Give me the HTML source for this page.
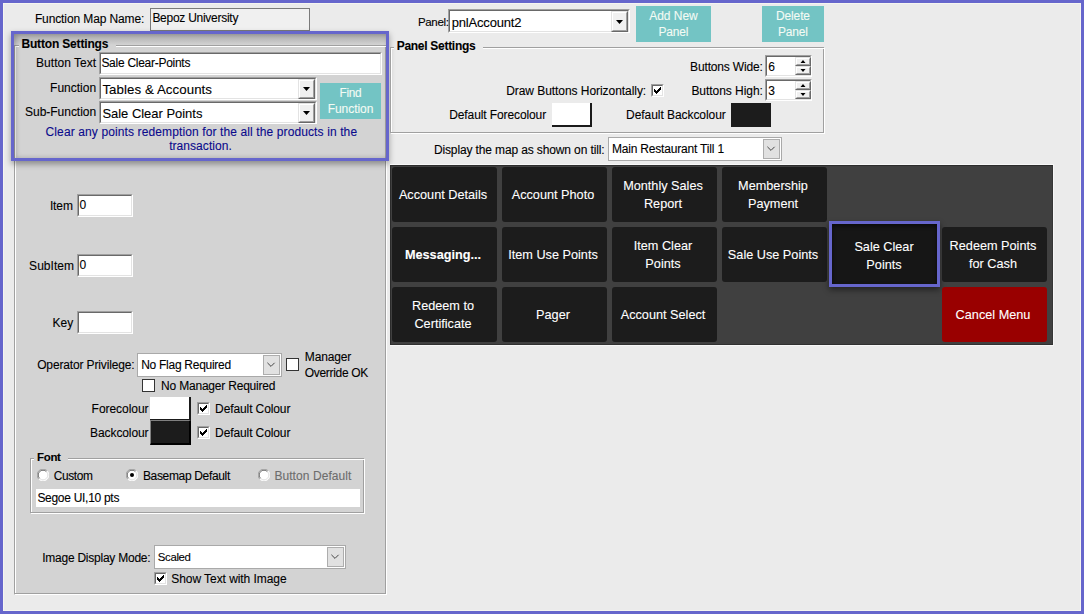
<!DOCTYPE html><html><head><meta charset="utf-8"><style>html,body{margin:0;padding:0;width:1084px;height:614px;overflow:hidden;position:relative;font-family:"Liberation Sans", sans-serif} div{-webkit-text-stroke:0.1px currentColor}</style></head><body><div style="position:absolute;left:0px;top:0px;width:1084px;height:614px;box-sizing:border-box;border:3px solid #6666cc;background:#ebebeb"></div><div style="position:absolute;left:3px;top:3px;width:1078px;height:608px;box-sizing:border-box;border:1px solid #f5f5f0"></div><div style="position:absolute;left:150px;top:8px;width:160px;height:23px;box-sizing:border-box;border:1px solid #7a7a7a;background:#f0f0f0"></div><div style="position:absolute;left:14px;top:34px;width:373px;height:561px;background:#d3d3d3"></div><div style="position:absolute;left:15px;top:46px;width:372px;height:549px;box-sizing:border-box;border:1px solid #fff;border-top:none"></div><div style="position:absolute;left:14px;top:45px;width:372px;height:549px;box-sizing:border-box;border:1px solid #a0a0a0;border-top:none"></div><div style="position:absolute;left:14px;top:45px;width:5px;height:1px;background:#a0a0a0"></div><div style="position:absolute;left:15px;top:46px;width:4px;height:1px;background:#fff"></div><div style="position:absolute;left:116px;top:45px;width:270px;height:1px;background:#a0a0a0"></div><div style="position:absolute;left:116px;top:46px;width:270px;height:1px;background:#fff"></div><div style="position:absolute;left:11px;top:31px;width:378px;height:130px;box-sizing:border-box;border:3px solid #6666cc;box-shadow:0 3px 6px rgba(0,0,0,0.35), inset 2px 0 5px rgba(0,0,0,0.22)"></div><div style="position:absolute;left:14px;top:34px;width:372px;height:11px;background:linear-gradient(to bottom, rgba(0,0,0,0.2), rgba(0,0,0,0.1) 50%, rgba(0,0,0,0))"></div><div style="position:absolute;left:99px;top:52px;width:283px;height:23px;box-sizing:border-box;border:1px solid;border-color:#a0a0a0 #fff #fff #a0a0a0;background:#fff"></div><div style="position:absolute;left:100px;top:53px;width:281px;height:21px;box-sizing:border-box;border:1px solid;border-color:#696969 #e3e3e3 #e3e3e3 #696969"></div><div style="position:absolute;left:99px;top:77px;width:218px;height:23px;box-sizing:border-box;border:1px solid;border-color:#a0a0a0 #fff #fff #a0a0a0;background:#fff"></div><div style="position:absolute;left:100px;top:78px;width:216px;height:21px;box-sizing:border-box;border:1px solid;border-color:#696969 #e3e3e3 #e3e3e3 #696969"></div><div style="position:absolute;left:298px;top:79px;width:17px;height:20px;box-sizing:border-box;border:1px solid;border-color:#e3e3e3 #696969 #696969 #e3e3e3;background:#f0f0f0"></div><div style="position:absolute;left:299px;top:80px;width:15px;height:18px;box-sizing:border-box;border:1px solid;border-color:#fff #a0a0a0 #a0a0a0 #fff"></div><svg style="position:absolute;left:298px;top:87px" width="17" height="5"><path d="M5 0h7l-3.5 4z" fill="#000"/></svg><div style="position:absolute;left:99px;top:101px;width:218px;height:23px;box-sizing:border-box;border:1px solid;border-color:#a0a0a0 #fff #fff #a0a0a0;background:#fff"></div><div style="position:absolute;left:100px;top:102px;width:216px;height:21px;box-sizing:border-box;border:1px solid;border-color:#696969 #e3e3e3 #e3e3e3 #696969"></div><div style="position:absolute;left:298px;top:103px;width:17px;height:20px;box-sizing:border-box;border:1px solid;border-color:#e3e3e3 #696969 #696969 #e3e3e3;background:#f0f0f0"></div><div style="position:absolute;left:299px;top:104px;width:15px;height:18px;box-sizing:border-box;border:1px solid;border-color:#fff #a0a0a0 #a0a0a0 #fff"></div><svg style="position:absolute;left:298px;top:111px" width="17" height="5"><path d="M5 0h7l-3.5 4z" fill="#000"/></svg><div style="position:absolute;left:320px;top:83px;width:61px;height:36px;background:#73c4c4"></div><div style="position:absolute;left:77px;top:194px;width:56px;height:23px;box-sizing:border-box;border:1px solid;border-color:#a0a0a0 #fff #fff #a0a0a0;background:#fff"></div><div style="position:absolute;left:78px;top:195px;width:54px;height:21px;box-sizing:border-box;border:1px solid;border-color:#696969 #e3e3e3 #e3e3e3 #696969"></div><div style="position:absolute;left:77px;top:254px;width:56px;height:23px;box-sizing:border-box;border:1px solid;border-color:#a0a0a0 #fff #fff #a0a0a0;background:#fff"></div><div style="position:absolute;left:78px;top:255px;width:54px;height:21px;box-sizing:border-box;border:1px solid;border-color:#696969 #e3e3e3 #e3e3e3 #696969"></div><div style="position:absolute;left:77px;top:311px;width:56px;height:23px;box-sizing:border-box;border:1px solid;border-color:#a0a0a0 #fff #fff #a0a0a0;background:#fff"></div><div style="position:absolute;left:78px;top:312px;width:54px;height:21px;box-sizing:border-box;border:1px solid;border-color:#696969 #e3e3e3 #e3e3e3 #696969"></div><div style="position:absolute;left:137px;top:353px;width:145px;height:24px;box-sizing:border-box;border:1px solid #a9a9a9;background:#fff"></div><div style="position:absolute;left:263px;top:355px;width:17px;height:20px;box-sizing:border-box;border:1px solid #adadad;background:#e1e1e1"></div><svg style="position:absolute;left:263px;top:355px" width="17" height="20"><path d="M4.4 7.8l3.6 3.6l3.6 -3.6" fill="none" stroke="#454545" stroke-width="1"/></svg><div style="position:absolute;left:286px;top:358px;width:13px;height:13px;box-sizing:border-box;border:1px solid #333;background:#fff"></div><div style="position:absolute;left:142px;top:379px;width:13px;height:13px;box-sizing:border-box;border:1px solid #333;background:#fff"></div><div style="position:absolute;left:150px;top:397px;width:41px;height:24px;box-sizing:border-box;background:#fff;border-right:2px solid #1a1a1a;border-bottom:2px solid #1a1a1a"></div><div style="position:absolute;left:197px;top:402px;width:13px;height:13px;box-sizing:border-box;border:1px solid;border-color:#a0a0a0 #fff #fff #a0a0a0;background:#fff"></div><div style="position:absolute;left:198px;top:403px;width:11px;height:11px;box-sizing:border-box;border:1px solid;border-color:#696969 #e3e3e3 #e3e3e3 #696969"></div><svg style="position:absolute;left:197px;top:402px" width="13" height="13" shape-rendering="crispEdges"><path d="M9 3h1v1h-1zM8 4h1v1h-1zM9 4h1v1h-1zM3 5h1v1h-1zM7 5h1v1h-1zM8 5h1v1h-1zM9 5h1v1h-1zM3 6h1v1h-1zM4 6h1v1h-1zM6 6h1v1h-1zM7 6h1v1h-1zM8 6h1v1h-1zM3 7h1v1h-1zM4 7h1v1h-1zM5 7h1v1h-1zM6 7h1v1h-1zM7 7h1v1h-1zM4 8h1v1h-1zM5 8h1v1h-1zM6 8h1v1h-1zM5 9h1v1h-1z" fill="#000"/></svg><div style="position:absolute;left:150px;top:420px;width:41px;height:25px;box-sizing:border-box;background:#1c1c1c;border-top:1px solid #808080;border-left:1px solid #808080;border-right:2px solid #000;border-bottom:2px solid #000"></div><div style="position:absolute;left:197px;top:426px;width:13px;height:13px;box-sizing:border-box;border:1px solid;border-color:#a0a0a0 #fff #fff #a0a0a0;background:#fff"></div><div style="position:absolute;left:198px;top:427px;width:11px;height:11px;box-sizing:border-box;border:1px solid;border-color:#696969 #e3e3e3 #e3e3e3 #696969"></div><svg style="position:absolute;left:197px;top:426px" width="13" height="13" shape-rendering="crispEdges"><path d="M9 3h1v1h-1zM8 4h1v1h-1zM9 4h1v1h-1zM3 5h1v1h-1zM7 5h1v1h-1zM8 5h1v1h-1zM9 5h1v1h-1zM3 6h1v1h-1zM4 6h1v1h-1zM6 6h1v1h-1zM7 6h1v1h-1zM8 6h1v1h-1zM3 7h1v1h-1zM4 7h1v1h-1zM5 7h1v1h-1zM6 7h1v1h-1zM7 7h1v1h-1zM4 8h1v1h-1zM5 8h1v1h-1zM6 8h1v1h-1zM5 9h1v1h-1z" fill="#000"/></svg><div style="position:absolute;left:31px;top:459px;width:334px;height:55px;box-sizing:border-box;border:1px solid #fff;border-top:none"></div><div style="position:absolute;left:30px;top:458px;width:334px;height:55px;box-sizing:border-box;border:1px solid #a0a0a0;border-top:none"></div><div style="position:absolute;left:30px;top:458px;width:4px;height:1px;background:#a0a0a0"></div><div style="position:absolute;left:31px;top:459px;width:3px;height:1px;background:#fff"></div><div style="position:absolute;left:68px;top:458px;width:296px;height:1px;background:#a0a0a0"></div><div style="position:absolute;left:68px;top:459px;width:296px;height:1px;background:#fff"></div><svg style="position:absolute;left:37px;top:469px" width="12" height="12"><circle cx="6" cy="6" r="5.5" fill="#fff"/><path d="M1.8 10.2A5.5 5.5 0 0 1 10.2 1.8" fill="none" stroke="#a0a0a0" stroke-width="1"/><path d="M2.6 9.4A4.5 4.5 0 0 1 9.4 2.6" fill="none" stroke="#696969" stroke-width="1"/><path d="M10.2 1.8A5.5 5.5 0 0 1 1.8 10.2" fill="none" stroke="#fff" stroke-width="1"/><path d="M9.4 2.6A4.5 4.5 0 0 1 2.6 9.4" fill="none" stroke="#e3e3e3" stroke-width="1"/></svg><svg style="position:absolute;left:126px;top:469px" width="12" height="12"><circle cx="6" cy="6" r="5.5" fill="#fff"/><path d="M1.8 10.2A5.5 5.5 0 0 1 10.2 1.8" fill="none" stroke="#a0a0a0" stroke-width="1"/><path d="M2.6 9.4A4.5 4.5 0 0 1 9.4 2.6" fill="none" stroke="#696969" stroke-width="1"/><path d="M10.2 1.8A5.5 5.5 0 0 1 1.8 10.2" fill="none" stroke="#fff" stroke-width="1"/><path d="M9.4 2.6A4.5 4.5 0 0 1 2.6 9.4" fill="none" stroke="#e3e3e3" stroke-width="1"/><circle cx="6" cy="6" r="2" fill="#000"/></svg><svg style="position:absolute;left:258px;top:469px" width="12" height="12"><circle cx="6" cy="6" r="5.5" fill="#fff"/><path d="M1.8 10.2A5.5 5.5 0 0 1 10.2 1.8" fill="none" stroke="#a0a0a0" stroke-width="1"/><path d="M2.6 9.4A4.5 4.5 0 0 1 9.4 2.6" fill="none" stroke="#696969" stroke-width="1"/><path d="M10.2 1.8A5.5 5.5 0 0 1 1.8 10.2" fill="none" stroke="#fff" stroke-width="1"/><path d="M9.4 2.6A4.5 4.5 0 0 1 2.6 9.4" fill="none" stroke="#e3e3e3" stroke-width="1"/></svg><div style="position:absolute;left:36px;top:489px;width:324px;height:18px;background:#fff"></div><div style="position:absolute;left:154px;top:545px;width:192px;height:24px;box-sizing:border-box;border:1px solid #a9a9a9;background:#fff"></div><div style="position:absolute;left:327px;top:547px;width:17px;height:20px;box-sizing:border-box;border:1px solid #adadad;background:#e1e1e1"></div><svg style="position:absolute;left:327px;top:547px" width="17" height="20"><path d="M4.4 7.8l3.6 3.6l3.6 -3.6" fill="none" stroke="#454545" stroke-width="1"/></svg><div style="position:absolute;left:154px;top:572px;width:13px;height:13px;box-sizing:border-box;border:1px solid;border-color:#a0a0a0 #fff #fff #a0a0a0;background:#fff"></div><div style="position:absolute;left:155px;top:573px;width:11px;height:11px;box-sizing:border-box;border:1px solid;border-color:#696969 #e3e3e3 #e3e3e3 #696969"></div><svg style="position:absolute;left:154px;top:572px" width="13" height="13" shape-rendering="crispEdges"><path d="M9 3h1v1h-1zM8 4h1v1h-1zM9 4h1v1h-1zM3 5h1v1h-1zM7 5h1v1h-1zM8 5h1v1h-1zM9 5h1v1h-1zM3 6h1v1h-1zM4 6h1v1h-1zM6 6h1v1h-1zM7 6h1v1h-1zM8 6h1v1h-1zM3 7h1v1h-1zM4 7h1v1h-1zM5 7h1v1h-1zM6 7h1v1h-1zM7 7h1v1h-1zM4 8h1v1h-1zM5 8h1v1h-1zM6 8h1v1h-1zM5 9h1v1h-1z" fill="#000"/></svg><div style="position:absolute;left:448px;top:9px;width:182px;height:24px;box-sizing:border-box;border:1px solid;border-color:#a0a0a0 #fff #fff #a0a0a0;background:#fff"></div><div style="position:absolute;left:449px;top:10px;width:180px;height:22px;box-sizing:border-box;border:1px solid;border-color:#696969 #e3e3e3 #e3e3e3 #696969"></div><div style="position:absolute;left:611px;top:11px;width:17px;height:21px;box-sizing:border-box;border:1px solid;border-color:#e3e3e3 #696969 #696969 #e3e3e3;background:#f0f0f0"></div><div style="position:absolute;left:612px;top:12px;width:15px;height:19px;box-sizing:border-box;border:1px solid;border-color:#fff #a0a0a0 #a0a0a0 #fff"></div><svg style="position:absolute;left:611px;top:20px" width="17" height="5"><path d="M5 0h7l-3.5 4z" fill="#000"/></svg><div style="position:absolute;left:636px;top:6px;width:75px;height:36px;background:#73c4c4"></div><div style="position:absolute;left:762px;top:6px;width:62px;height:36px;background:#73c4c4"></div><div style="position:absolute;left:391px;top:48px;width:434px;height:86px;box-sizing:border-box;border:1px solid #fff;border-top:none"></div><div style="position:absolute;left:390px;top:47px;width:434px;height:86px;box-sizing:border-box;border:1px solid #a0a0a0;border-top:none"></div><div style="position:absolute;left:390px;top:47px;width:4px;height:1px;background:#a0a0a0"></div><div style="position:absolute;left:391px;top:48px;width:3px;height:1px;background:#fff"></div><div style="position:absolute;left:483px;top:47px;width:341px;height:1px;background:#a0a0a0"></div><div style="position:absolute;left:483px;top:48px;width:341px;height:1px;background:#fff"></div><div style="position:absolute;left:765px;top:55px;width:47px;height:22px;box-sizing:border-box;border:1px solid;border-color:#a0a0a0 #fff #fff #a0a0a0;background:#fff"></div><div style="position:absolute;left:766px;top:56px;width:45px;height:20px;box-sizing:border-box;border:1px solid;border-color:#696969 #e3e3e3 #e3e3e3 #696969"></div><div style="position:absolute;left:651px;top:84px;width:13px;height:13px;box-sizing:border-box;border:1px solid;border-color:#a0a0a0 #fff #fff #a0a0a0;background:#fff"></div><div style="position:absolute;left:652px;top:85px;width:11px;height:11px;box-sizing:border-box;border:1px solid;border-color:#696969 #e3e3e3 #e3e3e3 #696969"></div><svg style="position:absolute;left:651px;top:84px" width="13" height="13" shape-rendering="crispEdges"><path d="M9 3h1v1h-1zM8 4h1v1h-1zM9 4h1v1h-1zM3 5h1v1h-1zM7 5h1v1h-1zM8 5h1v1h-1zM9 5h1v1h-1zM3 6h1v1h-1zM4 6h1v1h-1zM6 6h1v1h-1zM7 6h1v1h-1zM8 6h1v1h-1zM3 7h1v1h-1zM4 7h1v1h-1zM5 7h1v1h-1zM6 7h1v1h-1zM7 7h1v1h-1zM4 8h1v1h-1zM5 8h1v1h-1zM6 8h1v1h-1zM5 9h1v1h-1z" fill="#000"/></svg><div style="position:absolute;left:765px;top:79px;width:47px;height:22px;box-sizing:border-box;border:1px solid;border-color:#a0a0a0 #fff #fff #a0a0a0;background:#fff"></div><div style="position:absolute;left:766px;top:80px;width:45px;height:20px;box-sizing:border-box;border:1px solid;border-color:#696969 #e3e3e3 #e3e3e3 #696969"></div><div style="position:absolute;left:795px;top:57px;width:16px;height:9px;box-sizing:border-box;border:1px solid;border-color:#e3e3e3 #696969 #696969 #e3e3e3;background:#f0f0f0"></div><div style="position:absolute;left:796px;top:58px;width:14px;height:7px;box-sizing:border-box;border:1px solid;border-color:#fff #a0a0a0 #a0a0a0 #fff"></div><div style="position:absolute;left:795px;top:66px;width:16px;height:9px;box-sizing:border-box;border:1px solid;border-color:#e3e3e3 #696969 #696969 #e3e3e3;background:#f0f0f0"></div><div style="position:absolute;left:796px;top:67px;width:14px;height:7px;box-sizing:border-box;border:1px solid;border-color:#fff #a0a0a0 #a0a0a0 #fff"></div><svg style="position:absolute;left:795px;top:57px" width="16" height="18"><path d="M5.5 6h5l-2.5 -3z M5.5 12h5l-2.5 3z" fill="#000"/></svg><div style="position:absolute;left:795px;top:81px;width:16px;height:9px;box-sizing:border-box;border:1px solid;border-color:#e3e3e3 #696969 #696969 #e3e3e3;background:#f0f0f0"></div><div style="position:absolute;left:796px;top:82px;width:14px;height:7px;box-sizing:border-box;border:1px solid;border-color:#fff #a0a0a0 #a0a0a0 #fff"></div><div style="position:absolute;left:795px;top:90px;width:16px;height:9px;box-sizing:border-box;border:1px solid;border-color:#e3e3e3 #696969 #696969 #e3e3e3;background:#f0f0f0"></div><div style="position:absolute;left:796px;top:91px;width:14px;height:7px;box-sizing:border-box;border:1px solid;border-color:#fff #a0a0a0 #a0a0a0 #fff"></div><svg style="position:absolute;left:795px;top:81px" width="16" height="18"><path d="M5.5 6h5l-2.5 -3z M5.5 12h5l-2.5 3z" fill="#000"/></svg><div style="position:absolute;left:552px;top:103px;width:40px;height:24px;box-sizing:border-box;background:#fff;border-right:2px solid #1a1a1a;border-bottom:2px solid #1a1a1a"></div><div style="position:absolute;left:731px;top:103px;width:40px;height:24px;background:#1c1c1c"></div><div style="position:absolute;left:608px;top:137px;width:174px;height:24px;box-sizing:border-box;border:1px solid #a9a9a9;background:#fff"></div><div style="position:absolute;left:763px;top:139px;width:17px;height:20px;box-sizing:border-box;border:1px solid #adadad;background:#e1e1e1"></div><svg style="position:absolute;left:763px;top:139px" width="17" height="20"><path d="M4.4 7.8l3.6 3.6l3.6 -3.6" fill="none" stroke="#454545" stroke-width="1"/></svg><div style="position:absolute;left:390px;top:164px;width:664px;height:1px;background:#f8f8f8"></div><div style="position:absolute;left:1053px;top:164px;width:1px;height:182px;background:#f6f6f6"></div><div style="position:absolute;left:390px;top:345px;width:664px;height:1px;background:#f6f6f6"></div><div style="position:absolute;left:390px;top:165px;width:663px;height:180px;box-sizing:border-box;background:#404040;border:1px solid;border-color:#2c2c2c #363636 #303030 #2c2c2c"></div><div style="position:absolute;left:392px;top:167px;width:105px;height:55px;background:#1c1c1c;border-radius:3px"></div><div style="position:absolute;left:502px;top:167px;width:105px;height:55px;background:#1c1c1c;border-radius:3px"></div><div style="position:absolute;left:612px;top:167px;width:105px;height:55px;background:#1c1c1c;border-radius:3px"></div><div style="position:absolute;left:722px;top:167px;width:105px;height:55px;background:#1c1c1c;border-radius:3px"></div><div style="position:absolute;left:392px;top:227px;width:105px;height:55px;background:#1c1c1c;border-radius:3px"></div><div style="position:absolute;left:502px;top:227px;width:105px;height:55px;background:#1c1c1c;border-radius:3px"></div><div style="position:absolute;left:612px;top:227px;width:105px;height:55px;background:#1c1c1c;border-radius:3px"></div><div style="position:absolute;left:722px;top:227px;width:105px;height:55px;background:#1c1c1c;border-radius:3px"></div><div style="position:absolute;left:829px;top:221px;width:111px;height:66px;box-sizing:border-box;border:3px solid #6666cc;background:#161616;box-shadow:0 3px 6px rgba(0,0,0,0.45), inset 0 2px 4px rgba(0,0,0,0.6)"></div><div style="position:absolute;left:942px;top:227px;width:105px;height:55px;background:#1c1c1c;border-radius:3px"></div><div style="position:absolute;left:392px;top:287px;width:105px;height:55px;background:#1c1c1c;border-radius:3px"></div><div style="position:absolute;left:502px;top:287px;width:105px;height:55px;background:#1c1c1c;border-radius:3px"></div><div style="position:absolute;left:612px;top:287px;width:105px;height:55px;background:#1c1c1c;border-radius:3px"></div><div style="position:absolute;left:942px;top:287px;width:105px;height:55px;background:#990000;border-radius:3px"></div><div style="position:absolute;left:34.90px;top:12.00px;font-size:12.00px;font-weight:400;color:#000;white-space:nowrap;line-height:normal;letter-spacing:-0.111px">Function Map Name:</div><div style="position:absolute;left:152.40px;top:11.00px;font-size:12.00px;font-weight:400;color:#000;white-space:nowrap;line-height:normal;letter-spacing:-0.270px">Bepoz University</div><div style="position:absolute;left:21.40px;top:37.00px;font-size:12.00px;font-weight:700;color:#000;white-space:nowrap;line-height:normal;letter-spacing:-0.166px">Button Settings</div><div style="position:absolute;left:36.10px;top:56.00px;font-size:12.00px;font-weight:400;color:#000;white-space:nowrap;line-height:normal;letter-spacing:0.017px">Button Text</div><div style="position:absolute;left:101.40px;top:56.00px;font-size:12.00px;font-weight:400;color:#000;white-space:nowrap;line-height:normal;letter-spacing:-0.273px">Sale Clear-Points</div><div style="position:absolute;left:50.10px;top:81.00px;font-size:12.00px;font-weight:400;color:#000;white-space:nowrap;line-height:normal;letter-spacing:-0.004px">Function</div><div style="position:absolute;left:102.40px;top:82.00px;font-size:13.30px;font-weight:400;color:#000;white-space:nowrap;line-height:normal;letter-spacing:0.059px">Tables &amp; Accounts</div><div style="position:absolute;left:25.10px;top:105.00px;font-size:12.00px;font-weight:400;color:#000;white-space:nowrap;line-height:normal;letter-spacing:-0.034px">Sub-Function</div><div style="position:absolute;left:102.40px;top:106.00px;font-size:13.00px;font-weight:400;color:#000;white-space:nowrap;line-height:normal;letter-spacing:-0.028px">Sale Clear Points</div><div style="position:absolute;left:339.50px;top:86.00px;font-size:11.85px;font-weight:400;color:#f4fbf4;white-space:nowrap;line-height:normal;letter-spacing:-0.350px">Find</div><div style="position:absolute;left:327.65px;top:102.00px;font-size:12.00px;font-weight:400;color:#f4fbf4;white-space:nowrap;line-height:normal;letter-spacing:-0.047px">Function</div><div style="position:absolute;left:45.55px;top:125.00px;font-size:12.00px;font-weight:400;color:#0a0a8c;white-space:nowrap;line-height:normal;letter-spacing:0.115px">Clear any points redemption for the all the products in the</div><div style="position:absolute;left:169.15px;top:139.00px;font-size:12.00px;font-weight:400;color:#0a0a8c;white-space:nowrap;line-height:normal;letter-spacing:0.059px">transaction.</div><div style="position:absolute;left:49.90px;top:199.00px;font-size:12.00px;font-weight:400;color:#000;white-space:nowrap;line-height:normal;letter-spacing:-0.115px">Item</div><div style="position:absolute;left:79.40px;top:198.00px;font-size:12.00px;font-weight:400;color:#000;white-space:nowrap;line-height:normal">0</div><div style="position:absolute;left:29.10px;top:259.00px;font-size:12.00px;font-weight:400;color:#000;white-space:nowrap;line-height:normal;letter-spacing:0.049px">SubItem</div><div style="position:absolute;left:79.40px;top:258.00px;font-size:12.00px;font-weight:400;color:#000;white-space:nowrap;line-height:normal">0</div><div style="position:absolute;left:52.60px;top:316.00px;font-size:12.00px;font-weight:400;color:#000;white-space:nowrap;line-height:normal;letter-spacing:0.006px">Key</div><div style="position:absolute;left:37.20px;top:358.00px;font-size:12.00px;font-weight:400;color:#000;white-space:nowrap;line-height:normal;letter-spacing:-0.147px">Operator Privilege:</div><div style="position:absolute;left:141.20px;top:358.00px;font-size:12.00px;font-weight:400;color:#000;white-space:nowrap;line-height:normal;letter-spacing:-0.271px">No Flag Required</div><div style="position:absolute;left:304.80px;top:350.00px;font-size:12.00px;font-weight:400;color:#000;white-space:nowrap;line-height:normal;letter-spacing:-0.163px">Manager</div><div style="position:absolute;left:304.80px;top:366.00px;font-size:12.00px;font-weight:400;color:#000;white-space:nowrap;line-height:normal;letter-spacing:-0.319px">Override OK</div><div style="position:absolute;left:161.10px;top:379.00px;font-size:12.00px;font-weight:400;color:#000;white-space:nowrap;line-height:normal;letter-spacing:-0.204px">No Manager Required</div><div style="position:absolute;left:91.60px;top:402.00px;font-size:12.00px;font-weight:400;color:#000;white-space:nowrap;line-height:normal;letter-spacing:-0.040px">Forecolour</div><div style="position:absolute;left:215.10px;top:402.00px;font-size:12.00px;font-weight:400;color:#000;white-space:nowrap;line-height:normal;letter-spacing:-0.109px">Default Colour</div><div style="position:absolute;left:90.10px;top:426.00px;font-size:12.00px;font-weight:400;color:#000;white-space:nowrap;line-height:normal;letter-spacing:-0.097px">Backcolour</div><div style="position:absolute;left:215.10px;top:426.00px;font-size:12.00px;font-weight:400;color:#000;white-space:nowrap;line-height:normal;letter-spacing:-0.109px">Default Colour</div><div style="position:absolute;left:37.10px;top:451.00px;font-size:11.47px;font-weight:700;color:#000;white-space:nowrap;line-height:normal;letter-spacing:-0.350px">Font</div><div style="position:absolute;left:53.70px;top:469.00px;font-size:11.91px;font-weight:400;color:#000;white-space:nowrap;line-height:normal;letter-spacing:-0.350px">Custom</div><div style="position:absolute;left:142.90px;top:469.00px;font-size:12.00px;font-weight:400;color:#000;white-space:nowrap;line-height:normal;letter-spacing:-0.333px">Basemap Default</div><div style="position:absolute;left:274.40px;top:469.00px;font-size:12.00px;font-weight:400;color:#6d6d6d;white-space:nowrap;line-height:normal;letter-spacing:0.072px">Button Default</div><div style="position:absolute;left:37.40px;top:491.00px;font-size:12.00px;font-weight:400;color:#000;white-space:nowrap;line-height:normal;letter-spacing:-0.290px">Segoe UI,10 pts</div><div style="position:absolute;left:42.20px;top:551.00px;font-size:12.00px;font-weight:400;color:#000;white-space:nowrap;line-height:normal;letter-spacing:-0.240px">Image Display Mode:</div><div style="position:absolute;left:157.80px;top:551.00px;font-size:11.43px;font-weight:400;color:#000;white-space:nowrap;line-height:normal;letter-spacing:-0.350px">Scaled</div><div style="position:absolute;left:171.30px;top:572.00px;font-size:12.00px;font-weight:400;color:#000;white-space:nowrap;line-height:normal;letter-spacing:-0.064px">Show Text with Image</div><div style="position:absolute;left:417.90px;top:16.00px;font-size:11.55px;font-weight:400;color:#000;white-space:nowrap;line-height:normal;letter-spacing:-0.350px">Panel:</div><div style="position:absolute;left:451.80px;top:15.00px;font-size:13.00px;font-weight:400;color:#000;white-space:nowrap;line-height:normal;letter-spacing:-0.196px">pnlAccount2</div><div style="position:absolute;left:649.25px;top:9.00px;font-size:12.00px;font-weight:400;color:#f4fbf4;white-space:nowrap;line-height:normal;letter-spacing:-0.034px">Add New</div><div style="position:absolute;left:658.50px;top:25.00px;font-size:12.00px;font-weight:400;color:#f4fbf4;white-space:nowrap;line-height:normal;letter-spacing:-0.176px">Panel</div><div style="position:absolute;left:776.00px;top:9.00px;font-size:12.00px;font-weight:400;color:#f4fbf4;white-space:nowrap;line-height:normal;letter-spacing:-0.138px">Delete</div><div style="position:absolute;left:778.00px;top:25.00px;font-size:12.00px;font-weight:400;color:#f4fbf4;white-space:nowrap;line-height:normal;letter-spacing:-0.176px">Panel</div><div style="position:absolute;left:396.70px;top:39.00px;font-size:12.00px;font-weight:700;color:#000;white-space:nowrap;line-height:normal;letter-spacing:-0.284px">Panel Settings</div><div style="position:absolute;left:690.10px;top:60.00px;font-size:12.00px;font-weight:400;color:#000;white-space:nowrap;line-height:normal;letter-spacing:-0.159px">Buttons Wide:</div><div style="position:absolute;left:768.20px;top:60.00px;font-size:12.00px;font-weight:400;color:#000;white-space:nowrap;line-height:normal">6</div><div style="position:absolute;left:506.20px;top:84.00px;font-size:12.00px;font-weight:400;color:#000;white-space:nowrap;line-height:normal;letter-spacing:-0.056px">Draw Buttons Horizontally:</div><div style="position:absolute;left:691.40px;top:84.00px;font-size:12.00px;font-weight:400;color:#000;white-space:nowrap;line-height:normal;letter-spacing:-0.046px">Buttons High:</div><div style="position:absolute;left:768.20px;top:84.00px;font-size:12.00px;font-weight:400;color:#000;white-space:nowrap;line-height:normal">3</div><div style="position:absolute;left:449.20px;top:108.00px;font-size:12.00px;font-weight:400;color:#000;white-space:nowrap;line-height:normal;letter-spacing:-0.101px">Default Forecolour</div><div style="position:absolute;left:626.10px;top:108.00px;font-size:12.00px;font-weight:400;color:#000;white-space:nowrap;line-height:normal;letter-spacing:-0.060px">Default Backcolour</div><div style="position:absolute;left:433.90px;top:143.00px;font-size:12.00px;font-weight:400;color:#000;white-space:nowrap;line-height:normal;letter-spacing:-0.127px">Display the map as shown on till:</div><div style="position:absolute;left:611.90px;top:142.00px;font-size:12.00px;font-weight:400;color:#000;white-space:nowrap;line-height:normal;letter-spacing:-0.184px">Main Restaurant Till 1</div><div style="position:absolute;left:398.92px;top:188.00px;font-size:12.70px;font-weight:400;color:#fff;white-space:nowrap;line-height:normal">Account Details</div><div style="position:absolute;left:511.73px;top:188.00px;font-size:12.70px;font-weight:400;color:#fff;white-space:nowrap;line-height:normal">Account Photo</div><div style="position:absolute;left:623.16px;top:179.00px;font-size:12.70px;font-weight:400;color:#fff;white-space:nowrap;line-height:normal">Monthly Sales</div><div style="position:absolute;left:643.95px;top:197.00px;font-size:12.70px;font-weight:400;color:#fff;white-space:nowrap;line-height:normal">Report</div><div style="position:absolute;left:738.09px;top:179.00px;font-size:12.70px;font-weight:400;color:#fff;white-space:nowrap;line-height:normal">Membership</div><div style="position:absolute;left:747.96px;top:197.00px;font-size:12.70px;font-weight:400;color:#fff;white-space:nowrap;line-height:normal">Payment</div><div style="position:absolute;left:404.92px;top:248.00px;font-size:12.70px;font-weight:700;color:#fff;white-space:nowrap;line-height:normal">Messaging...</div><div style="position:absolute;left:508.22px;top:248.00px;font-size:12.70px;font-weight:400;color:#fff;white-space:nowrap;line-height:normal">Item Use Points</div><div style="position:absolute;left:633.73px;top:239.00px;font-size:12.70px;font-weight:400;color:#fff;white-space:nowrap;line-height:normal">Item Clear</div><div style="position:absolute;left:645.37px;top:257.00px;font-size:12.70px;font-weight:400;color:#fff;white-space:nowrap;line-height:normal">Points</div><div style="position:absolute;left:727.86px;top:248.00px;font-size:12.70px;font-weight:400;color:#fff;white-space:nowrap;line-height:normal">Sale Use Points</div><div style="position:absolute;left:854.38px;top:240.00px;font-size:12.70px;font-weight:400;color:#fff;white-space:nowrap;line-height:normal">Sale Clear</div><div style="position:absolute;left:866.37px;top:258.00px;font-size:12.70px;font-weight:400;color:#fff;white-space:nowrap;line-height:normal">Points</div><div style="position:absolute;left:949.62px;top:239.00px;font-size:12.70px;font-weight:400;color:#fff;white-space:nowrap;line-height:normal">Redeem Points</div><div style="position:absolute;left:969.02px;top:257.00px;font-size:12.70px;font-weight:400;color:#fff;white-space:nowrap;line-height:normal">for Cash</div><div style="position:absolute;left:411.97px;top:299.00px;font-size:12.70px;font-weight:400;color:#fff;white-space:nowrap;line-height:normal">Redeem to</div><div style="position:absolute;left:414.44px;top:317.00px;font-size:12.70px;font-weight:400;color:#fff;white-space:nowrap;line-height:normal">Certificate</div><div style="position:absolute;left:536.07px;top:308.00px;font-size:12.70px;font-weight:400;color:#fff;white-space:nowrap;line-height:normal">Pager</div><div style="position:absolute;left:620.68px;top:308.00px;font-size:12.70px;font-weight:400;color:#fff;white-space:nowrap;line-height:normal">Account Select</div><div style="position:absolute;left:955.62px;top:308.00px;font-size:12.70px;font-weight:400;color:#fff;white-space:nowrap;line-height:normal">Cancel Menu</div></body></html>
